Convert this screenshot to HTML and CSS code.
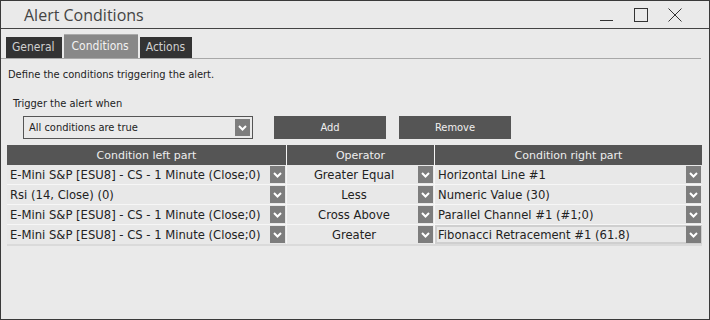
FILE: index.html
```html
<!DOCTYPE html>
<html lang="en">
<head>
<meta charset="UTF-8">
<title>Alert Conditions</title>
<link rel="stylesheet" href="styles.css">
</head>
<body>
<div class="window">
  <div class="titlebar">
    <span class="title">Alert Conditions</span>
    <div class="controls">
      <svg width="14" height="14" viewBox="0 0 14 14"><line x1="0" y1="12.5" x2="13" y2="12.5" stroke="#333" stroke-width="1"/></svg>
      <svg width="14" height="14" viewBox="0 0 14 14"><rect x="0.5" y="0.5" width="13" height="13" fill="none" stroke="#333" stroke-width="1"/></svg>
      <svg width="14" height="14" viewBox="0 0 14 14"><path d="M0.5 0.5 L13.5 13.5 M13.5 0.5 L0.5 13.5" stroke="#333" stroke-width="1"/></svg>
    </div>
  </div>

  <div class="tabs">
    <div class="tab">General</div>
    <div class="tab active">Conditions</div>
    <div class="tab">Actions</div>
  </div>

  <div class="content">
    <p class="intro">Define the conditions triggering the alert.</p>
    <p class="label">Trigger the alert when</p>
    <div class="controls-row">
      <div class="select">
        <span>All conditions are true</span>
        <span class="arrow"><svg width="9" height="6" viewBox="0 0 9 6"><polyline points="1,1 4.5,4.5 8,1" fill="none" stroke="#fff" stroke-width="2"/></svg></span>
      </div>
      <button class="btn">Add</button>
      <button class="btn">Remove</button>
    </div>

    <table class="grid">
      <thead>
        <tr>
          <th class="col-left">Condition left part</th>
          <th class="col-op">Operator</th>
          <th class="col-right">Condition right part</th>
        </tr>
      </thead>
      <tbody>
        <tr>
          <td><div class="cell"><span>E-Mini S&amp;P [ESU8] - CS - 1 Minute (Close;0)</span><span class="arrow"><svg width="9" height="6" viewBox="0 0 9 6"><polyline points="1,1 4.5,4.5 8,1" fill="none" stroke="#fff" stroke-width="2"/></svg></span></div></td>
          <td><div class="cell center"><span>Greater Equal</span><span class="arrow"><svg width="9" height="6" viewBox="0 0 9 6"><polyline points="1,1 4.5,4.5 8,1" fill="none" stroke="#fff" stroke-width="2"/></svg></span></div></td>
          <td><div class="cell"><span>Horizontal Line #1</span><span class="arrow"><svg width="9" height="6" viewBox="0 0 9 6"><polyline points="1,1 4.5,4.5 8,1" fill="none" stroke="#fff" stroke-width="2"/></svg></span></div></td>
        </tr>
        <tr>
          <td><div class="cell"><span>Rsi (14, Close) (0)</span><span class="arrow"><svg width="9" height="6" viewBox="0 0 9 6"><polyline points="1,1 4.5,4.5 8,1" fill="none" stroke="#fff" stroke-width="2"/></svg></span></div></td>
          <td><div class="cell center"><span>Less</span><span class="arrow"><svg width="9" height="6" viewBox="0 0 9 6"><polyline points="1,1 4.5,4.5 8,1" fill="none" stroke="#fff" stroke-width="2"/></svg></span></div></td>
          <td><div class="cell"><span>Numeric Value (30)</span><span class="arrow"><svg width="9" height="6" viewBox="0 0 9 6"><polyline points="1,1 4.5,4.5 8,1" fill="none" stroke="#fff" stroke-width="2"/></svg></span></div></td>
        </tr>
        <tr>
          <td><div class="cell"><span>E-Mini S&amp;P [ESU8] - CS - 1 Minute (Close;0)</span><span class="arrow"><svg width="9" height="6" viewBox="0 0 9 6"><polyline points="1,1 4.5,4.5 8,1" fill="none" stroke="#fff" stroke-width="2"/></svg></span></div></td>
          <td><div class="cell center"><span>Cross Above</span><span class="arrow"><svg width="9" height="6" viewBox="0 0 9 6"><polyline points="1,1 4.5,4.5 8,1" fill="none" stroke="#fff" stroke-width="2"/></svg></span></div></td>
          <td><div class="cell"><span>Parallel Channel #1 (#1;0)</span><span class="arrow"><svg width="9" height="6" viewBox="0 0 9 6"><polyline points="1,1 4.5,4.5 8,1" fill="none" stroke="#fff" stroke-width="2"/></svg></span></div></td>
        </tr>
        <tr>
          <td><div class="cell"><span>E-Mini S&amp;P [ESU8] - CS - 1 Minute (Close;0)</span><span class="arrow"><svg width="9" height="6" viewBox="0 0 9 6"><polyline points="1,1 4.5,4.5 8,1" fill="none" stroke="#fff" stroke-width="2"/></svg></span></div></td>
          <td><div class="cell center"><span>Greater</span><span class="arrow"><svg width="9" height="6" viewBox="0 0 9 6"><polyline points="1,1 4.5,4.5 8,1" fill="none" stroke="#fff" stroke-width="2"/></svg></span></div></td>
          <td class="selected"><div class="cell"><span>Fibonacci Retracement #1 (61.8)</span><span class="arrow"><svg width="9" height="6" viewBox="0 0 9 6"><polyline points="1,1 4.5,4.5 8,1" fill="none" stroke="#fff" stroke-width="2"/></svg></span></div></td>
        </tr>
      </tbody>
    </table>
  </div>
</div>
</body>
</html>
```

FILE: styles.css
```css
body {
  margin: 0;
  font-family: 'DejaVu Sans Condensed', 'DejaVu Sans', sans-serif;
  font-size: 11px;
  color: #222;
}

.window {
  width: 710px;
  height: 320px;
  box-sizing: border-box;
  border: 1px solid #3a3a3a;
  background-color: #eaeaea;
  display: flex;
  flex-direction: column;
}

.titlebar {
  height: 27px;
  display: flex;
  align-items: center;
  justify-content: space-between;
  border-bottom: 1px solid #444;
}

.title {
  font-family: 'Open Sans', sans-serif;
  font-size: 16px;
  color: #444;
  padding-left: 23px;
}

.controls {
  display: flex;
  gap: 20px;
  padding-right: 27px;
  padding-top: 1px;
}

.controls svg {
  display: block;
}

.tabs {
  display: flex;
  align-items: flex-end;
  gap: 2px;
  height: 29px;
  padding-left: 5px;
  border-bottom: 1px solid #a8a8a8;
  margin-right: 8px;
}

.tab {
  background-color: #333;
  color: #d0d0d0;
  font-size: 12px;
  height: 21px;
  line-height: 21px;
  padding: 0 7px 0 6px;
}

.tab.active {
  background-color: #888;
  color: #f2f2f2;
  height: 24px;
  line-height: 22px;
  padding: 0 9px 0 8px;
  border-top: 1px solid #aaa;
  box-sizing: border-box;
}

.content {
  padding: 0 6px;
}

.intro {
  margin: 9px 0 0 1px;
  line-height: 14px;
}

.label {
  margin: 15px 0 0 6px;
  line-height: 14px;
}

.controls-row {
  display: flex;
  align-items: center;
  margin-top: 5px;
  margin-left: 16px;
}

.select {
  width: 230px;
  height: 23px;
  box-sizing: border-box;
  border: 1px solid #555;
  display: flex;
  align-items: center;
  justify-content: space-between;
  padding: 0 2px 0 5px;
}

.arrow {
  width: 15px;
  height: 17px;
  background-color: #7d7d7d;
  display: flex;
  align-items: center;
  justify-content: center;
  flex-shrink: 0;
}

.btn {
  font-family: inherit;
  font-size: 11px;
  background-color: #555;
  color: #f0f0f0;
  border: none;
  width: 112px;
  height: 23px;
  margin-left: 21px;
  padding: 0;
}

.btn + .btn {
  margin-left: 13px;
}

.grid {
  margin-top: 6px;
  width: 695px;
  border-collapse: collapse;
  table-layout: fixed;
  border-bottom: 2px solid #dadada;
  font-family: 'DejaVu Sans', sans-serif;
}

.grid th {
  background-color: #555;
  color: #eee;
  font-weight: normal;
  height: 20px;
  padding: 0;
  border-left: 1px solid #f4f4f4;
}

.grid th:first-child, .grid td:first-child {
  border-left: none;
}

.col-left { width: 279px; }
.col-op { width: 147px; }

.grid td {
  height: 19px;
  padding: 0;
  font-size: 11.6px;
  border-left: 1px solid #f6f6f6;
  border-bottom: 1px solid #f6f6f6;
  background-color: #e8e8e8;
}

.cell {
  display: flex;
  align-items: center;
  justify-content: space-between;
  height: 19px;
  padding: 0 1px 0 3px;
}

.cell span:first-child {
  white-space: nowrap;
}

.cell.center span:first-child {
  flex: 1;
  text-align: center;
}

.grid td.selected .cell {
  box-shadow: inset 0 0 0 2px #cfcfcf;
}
```
